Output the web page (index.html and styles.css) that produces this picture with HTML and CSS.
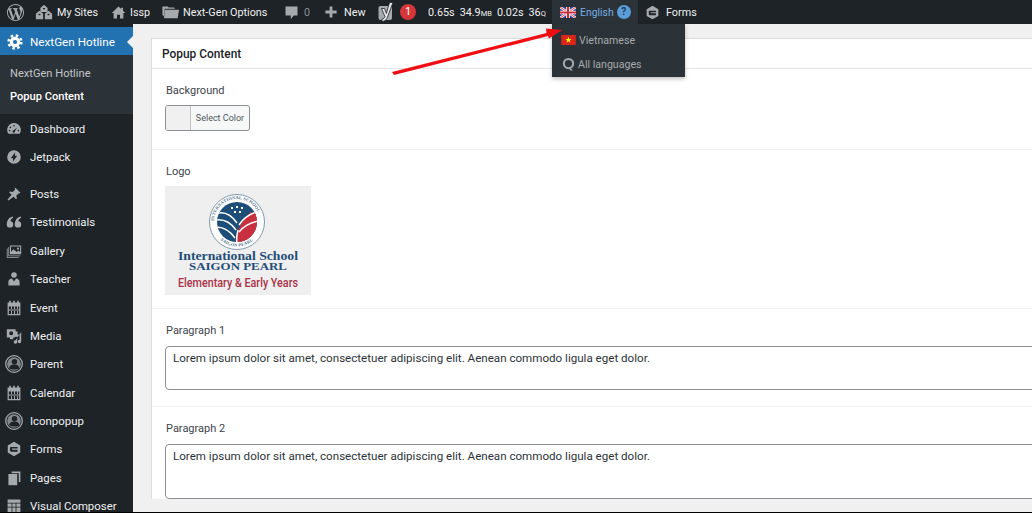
FILE: index.html
```html
<!DOCTYPE html>
<html lang="en">
<head>
<meta charset="utf-8">
<title>Popup Content</title>
<link rel="stylesheet" href="styles.css">
</head>
<body>
<svg class="defs" width="0" height="0" aria-hidden="true">
  <symbol id="i-cal" viewBox="0 0 20 20"><path d="M4 1h2v3H4zM9 1h2v3H9zM14 1h2v3h-2z"/><path d="M2 3h16v16H2zM3.500 8v9.500h2.800V8zm4 0v9.500h2.500V8h-2.500zm3.800 0v9.500h2.500V8zm3.700 0v9.500h1.500V8zM3.500 12h13v1h-13z" fill-rule="evenodd"/></symbol>
  <symbol id="i-person" viewBox="0 0 20 20"><circle cx="10" cy="10" r="9.200" fill="none" stroke="currentColor" stroke-width="1.400"/><circle cx="10" cy="10" r="7.600" opacity=".75"/><circle cx="10.500" cy="7.500" r="3" fill="#1d2327"/><path d="M4.500 15c.5-3.500 3-4.500 6-4.500s5 1 5.500 4.500c-3 1.500-8 1.500-11.500 0z" fill="#1d2327"/></symbol>
  <symbol id="i-forms" viewBox="0 0 20 20"><path d="M10 1l7.800 4.500v9L10 19l-7.800-4.500v-9z"/><path d="M6 7.500h8.500v2h-7v1.500h7v2.500H6.500C5.500 13.500 5 13 5 12V8.500c0-.6.4-1 1-1z" fill="#1d2327"/></symbol>
</svg>

<header class="adminbar">
  <a class="bar-item w-logo"><svg class="ico-w" viewBox="0 0 20 20"><path d="M20 10c0-5.510-4.490-10-10-10C4.480 0 0 4.490 0 10c0 5.520 4.480 10 10 10 5.510 0 10-4.480 10-10zM7.780 15.370L4.370 6.220c.55-.02 1.170-.08 1.170-.08.5-.06.44-1.130-.06-1.110 0 0-1.450.11-2.370.11-.18 0-.37 0-.58-.01C4.120 2.690 6.870 1.110 10 1.110c2.330 0 4.450.87 6.050 2.340-.68-.11-1.650.39-1.650 1.580 0 .74.45 1.360.9 2.100.35.61.55 1.360.55 2.460 0 1.490-1.400 5-1.400 5l-3.030-8.370c.54-.02.82-.17.82-.17.5-.05.44-1.250-.06-1.220 0 0-1.440.12-2.380.12-.87 0-2.330-.12-2.330-.12-.5-.03-.56 1.200-.06 1.220l.92.08 1.260 3.410zM17.410 10c.24-.64.74-1.870.43-4.250.7 1.290 1.050 2.710 1.050 4.250 0 3.290-1.730 6.240-4.400 7.780.97-2.590 1.940-5.200 2.920-7.780zM6.100 18.090C3.120 16.650 1.110 13.530 1.110 10c0-1.300.23-2.480.72-3.590C3.250 10.300 4.670 14.200 6.100 18.090zm4.030-6.630l2.580 6.980c-.86.29-1.760.45-2.710.45-.79 0-1.570-.11-2.290-.33.81-2.380 1.620-4.740 2.420-7.100z"/></svg></a>
  <a class="bar-item w-sites"><svg class="ico" viewBox="0 0 20 20"><path d="M10 2l4 3.500V10H6V5.500zM8.800 5.500v1.500h2.400V5.500zM5 8.500l4 3.500v6H1v-6zM4 12v1.500h2V12zM15 8.500l4 3.500v6h-8v-6zM14 12v1.500h2V12z" fill-rule="evenodd"/></svg><span>My Sites</span></a>
  <a class="bar-item w-home"><svg class="ico ico-15" viewBox="0 0 20 20"><path d="M10 2L1 10.500h2.500V18h4.500v-5h4v5h4.500v-7.500H19l-3-2.900V3.500h-2.500v1.700z"/></svg><span>Issp</span></a>
  <a class="bar-item w-folder"><svg class="ico ico-18" viewBox="0 0 20 20"><path d="M1 4h6l1 1h6l1 1.500H3.500L2.500 15 1 13z"/><path d="M3.500 7.500H19.500L18 17H2.800z"/></svg><span>Next-Gen Options</span></a>
  <a class="bar-item w-comment"><svg class="ico ico-15" viewBox="0 0 20 20"><path d="M2 2h16v12h-5l-4 5v-5H2z"/></svg><span class="dim">0</span></a>
  <a class="bar-item w-new"><svg class="ico ico-14" viewBox="0 0 20 20"><path d="M8 2h4v6h6v4h-6v6H8v-6H2V8h6z"/></svg><span>New</span></a>
  <a class="bar-item w-yoast"><svg class="ico ico-y" viewBox="0 0 16 20"><rect x="0.500" y="4" width="13.500" height="14" rx="2"/><path d="M11.500 0.500H15L9.300 15.500C8.300 18 6.500 19.500 4 19.500V17c1.500 0 2.500-.7 2.900-2.500L3.500 6.500h3l1.900 5z" fill="#e8e8e8" stroke="#1d2327" stroke-width=".8"/></svg><span class="badge">1</span></a>
  <a class="bar-item w-perf"><span>0.65s</span><span>34.9<small>MB</small></span><span>0.02s</span><span>36<small>Q</small></span></a>
  <a class="bar-item w-lang">
    <svg class="flag" viewBox="0 0 16 11"><rect width="16" height="11" fill="#2b3f86"/><path d="M0 0l16 11M16 0L0 11" stroke="#fff" stroke-width="2.400"/><path d="M0 0l16 11M16 0L0 11" stroke="#cf2a3c" stroke-width=".9"/><path d="M8 0v11M0 5.500h16" stroke="#fff" stroke-width="3.600"/><path d="M8 0v11M0 5.500h16" stroke="#cf2a3c" stroke-width="2"/></svg>
    <span class="lang-name">English</span><span class="help">?</span>
  </a>
  <a class="bar-item w-forms"><svg class="ico ico-15" viewBox="0 0 20 20"><use href="#i-forms"/></svg><span>Forms</span></a>

  <div class="lang-menu">
    <a class="lang-row"><svg class="flag-vn" viewBox="0 0 16 11"><rect width="16" height="11" fill="#da251d"/><path d="M8 2l.9 2.400h2.500l-2 1.500.8 2.500L8 6.900 5.800 8.400l.8-2.500-2-1.500h2.500z" fill="#ff0"/></svg><span>Vietnamese</span></a>
    <a class="lang-row"><svg class="globe" viewBox="0 0 14 16"><circle cx="7" cy="7" r="5" fill="none" stroke="currentColor" stroke-width="2.200"/><path d="M9 11l2.500 4-2-.5L7 12z"/></svg><span>All languages</span></a>
  </div>
</header>

<div class="layout">
  <nav class="sidebar">
    <a class="menu-current">
      <svg class="gear" viewBox="0 0 20 20"><circle cx="10" cy="10" r="6.500" fill="#fff"/><circle cx="10" cy="10" r="8" fill="none" stroke="#fff" stroke-width="3.200" stroke-dasharray="3.100 3.180"/><circle cx="10" cy="10" r="2.600" fill="#2271b1"/></svg>
      <span>NextGen Hotline</span>
    </a>
    <div class="submenu">
      <a>NextGen Hotline</a>
      <a class="sub-on">Popup Content</a>
    </div>
    <ul class="menu">
      <li><svg viewBox="0 0 20 20"><path d="M10 2.500a8.500 8.500 0 0 0-7 13.300h14A8.500 8.500 0 0 0 10 2.500zM10 5a1 1 0 1 1 0 2 1 1 0 0 1 0-2zM5.500 7a1 1 0 1 1 0 2 1 1 0 0 1 0-2zM14 8l-2.800 4.500a1.600 1.600 0 1 1-1.600-1zM4.500 11a1 1 0 1 1 0 2 1 1 0 0 1 0-2zM15.500 11a1 1 0 1 1 0 2 1 1 0 0 1 0-2z" fill-rule="evenodd"/></svg><span>Dashboard</span></li>
      <li><svg viewBox="0 0 20 20"><path d="M10 1.500a8.500 8.500 0 1 0 0 17 8.500 8.500 0 0 0 0-17zM11.500 4L6 11.500h3L8.500 16l5.500-7.500h-3z" fill-rule="evenodd"/></svg><span>Jetpack</span></li>
      <li class="gap"><svg viewBox="0 0 20 20"><path d="M11.500 2l6.500 6.500-1 1-1-.5-3 3 .5 3.500-1 1-3-3L3 18l-1-1 5-6-3-3 1-1 3.500.5 3-3-.5-1z"/></svg><span>Posts</span></li>
      <li><svg viewBox="0 0 20 20"><circle cx="5" cy="13" r="4"/><path d="M1 13C1 8 3.500 4 8.500 3l.5 1.800C6.500 6 5.500 8 5.500 10z"/><circle cx="15" cy="13" r="4"/><path d="M11 13c0-5 2.500-9 7.500-10l.5 1.800c-2.500 1.200-3.500 3.200-3.500 5.200z"/></svg><span>Testimonials</span></li>
      <li><svg viewBox="0 0 20 20"><path d="M5 3h14v11H5zM6.300 4.300v6.500l3-3 4 3.500 2-2 2.400 2V4.300zM15 5.500a1.400 1.400 0 1 1 0 2.800 1.400 1.400 0 0 1 0-2.800z" fill-rule="evenodd"/><path d="M3 5h1v10.500h14v1H3z"/><path d="M1 7h1v10.500h14v1H1z"/></svg><span>Gallery</span></li>
      <li><svg viewBox="0 0 20 20"><circle cx="10" cy="5" r="3.500"/><path d="M3 18v-4c0-3 2-4.500 4.500-4.500L10 13l2.500-3.500C15 9.500 17 11 17 14v4z"/></svg><span>Teacher</span></li>
      <li><svg viewBox="0 0 20 20"><use href="#i-cal"/></svg><span>Event</span></li>
      <li><svg viewBox="0 0 20 20"><path d="M1 1.500h11v3h2.500V11H12l-1.500 1H9v2H5v-2H1zM6.500 4a2.500 2.500 0 1 0 0 5 2.500 2.500 0 0 0 0-5z" fill-rule="evenodd"/><path d="M19 5v12a2.200 2.200 0 1 1-2-2.200V8h-3v9.500a2.200 2.200 0 1 1-2-2.200"/></svg><span>Media</span></li>
      <li class="big"><svg viewBox="0 0 20 20"><use href="#i-person"/></svg><span>Parent</span></li>
      <li><svg viewBox="0 0 20 20"><use href="#i-cal"/></svg><span>Calendar</span></li>
      <li class="big"><svg viewBox="0 0 20 20"><use href="#i-person"/></svg><span>Iconpopup</span></li>
      <li><svg viewBox="0 0 20 20"><use href="#i-forms"/></svg><span>Forms</span></li>
      <li><svg viewBox="0 0 20 20"><path d="M7 2h11v13h-2V4H7z"/><path d="M3 5h11v14H3z"/></svg><span>Pages</span></li>
      <li><svg viewBox="0 0 20 20"><path d="M2 2h16v4H2zM2 7h5v4H2zM8 7h4v4H8zM13 7h5v4h-5zM2 12h5v6H2zM8 12h4v6H8zM13 12h5v6h-5z"/></svg><span>Visual Composer</span></li>
    </ul>
  </nav>

  <main class="content">
    <section class="card">
      <h2 class="card-title">Popup Content</h2>
      <div class="field field-bg">
        <label class="field-label">Background</label>
        <button class="color-btn" type="button"><span class="swatch"></span><span class="color-text">Select Color</span></button>
      </div>
      <div class="field field-logo">
        <label class="field-label">Logo</label>
        <svg class="logo" viewBox="0 0 146 109" role="img">
          <defs><clipPath id="seal"><circle cx="72" cy="36" r="20"/></clipPath></defs>
          <rect width="146" height="109" fill="#efefef"/>
          <circle cx="72" cy="36" r="27.500" fill="#fff" stroke="#7d99ad" stroke-width="1"/>
          <path id="ring" d="M49 36a23 23 0 1 1 46 0" fill="none"/>
          <path id="ring2" d="M47.500 36a24.500 24.500 0 0 0 49 0" fill="none"/>
          <text class="ring-text"><textPath href="#ring" startOffset="1">INTERNATIONAL SCHOOL</textPath></text>
          <text class="ring-text"><textPath href="#ring2" startOffset="20">SAIGON PEARL</textPath></text>
          <g clip-path="url(#seal)">
            <rect x="50" y="14" width="44" height="44" fill="#1d4e79"/>
            <path d="M72 56c-1-12 5-22 14-30l10 2v14c-8 10-16 16-24 14z" fill="#c9303f"/>
            <path d="M74 46c4-5 10-9 19-11M74 39c3-5 9-10 17-13" stroke="#fff" stroke-width="1.500" fill="none"/>
            <path d="M51 34c8-1 15 3 20 10M51 41c7 0 14 4 19 11M54 27c7-1 13 3 18 10" stroke="#fff" stroke-width="1.500" fill="none"/>
            <path d="M72 58c-1-6 0-10 1-14" stroke="#fff" stroke-width="1.500" fill="none"/>
            <path d="M66 21h2v2h-2zM71 20h2v2h-2zM76 21h2v2h-2zM69 25h2v2h-2zM74 25h2v2h-2z" fill="#fff"/>
          </g>
          <text class="logo-serif" x="13" y="73.500" textLength="120" lengthAdjust="spacingAndGlyphs">International School</text>
          <text class="logo-serif logo-sm" x="24" y="84" textLength="98" lengthAdjust="spacingAndGlyphs">SAIGON PEARL</text>
          <text class="logo-sans" x="13" y="100.500" textLength="120" lengthAdjust="spacingAndGlyphs">Elementary &amp; Early Years</text>
        </svg>
      </div>
      <div class="field field-p1">
        <label class="field-label">Paragraph 1</label>
        <div class="textbox tb-1">Lorem ipsum dolor sit amet, consectetuer adipiscing elit. Aenean commodo ligula eget dolor.</div>
      </div>
      <div class="field field-p2">
        <label class="field-label">Paragraph 2</label>
        <div class="textbox tb-2">Lorem ipsum dolor sit amet, consectetuer adipiscing elit. Aenean commodo ligula eget dolor.</div>
      </div>
    </section>
  </main>
</div>
<div class="edge"></div>

<svg class="arrow" viewBox="0 0 1032 513" aria-hidden="true"><path d="M392 72L546.500 33 546 28.500 562 30 549 38.500 548 36 394 75z" fill="#f00e12"/></svg>
</body>
</html>
```
FILE: styles.css
```css
* { box-sizing: border-box; }
html, body { margin: 0; height: 100%; }
body {
  position: relative;
  display: flex;
  flex-direction: column;
  width: 1032px;
  height: 513px;
  overflow: hidden;
  background: #f0f0f1;
  font-family: Roboto, "Noto Sans", sans-serif;
  font-size: 12px;
  color: #3c434a;
}
.defs { position: absolute; }
a { color: inherit; text-decoration: none; }

/* Admin bar */
.adminbar {
  position: relative;
  flex: 0 0 24px;
  display: flex;
  align-items: stretch;
  height: 24px;
  background: #1d2327;
  color: #f0f0f1;
  font-size: 10.8px;
}
.bar-item { display: flex; align-items: center; white-space: nowrap; }
.ico, .ico-w { fill: #a7aaad; flex: none; width: 18px; height: 18px; color: #a7aaad; }
.ico-15 { width: 15px; height: 15px; }
.ico-14 { width: 14px; height: 14px; }
.ico-18 { width: 19px; height: 18px; }
.ico-y { width: 16px; height: 20px; }
.ico-w { width: 17px; height: 17px; }
.w-logo { padding-left: 7px; width: 35px; }
.w-sites { width: 76px; gap: 4px; }
.w-home { width: 50px; gap: 4px; }
.w-folder { width: 123px; gap: 3px; }
.w-comment { width: 40px; gap: 5px; }
.w-new { width: 54px; gap: 6px; }
.w-yoast { width: 50px; gap: 6px; }
.w-perf { width: 124px; gap: 5px; }
.w-perf small { font-size: 7.5px; }
.dim { color: #8c8f94; }
.badge {
  width: 16px; height: 16px;
  border-radius: 50%;
  background: #d63638;
  color: #fff;
  text-align: center;
  line-height: 16px;
  font-size: 11px;
}
.w-lang { width: 86px; padding-left: 8px; background: #2c3338; color: #72aee6; }
.flag { width: 16px; height: 11px; flex: none; }
.lang-name { margin-left: 4px; font-size: 10.4px; }
.help {
  margin-left: 3px;
  width: 14px; height: 14px;
  border-radius: 50%;
  background: #5b9dd9;
  color: #1d3a5a;
  font-size: 10px;
  line-height: 14px;
  text-align: center;
  font-weight: 700;
}
.w-forms { gap: 6px; padding-left: 7px; }

.lang-menu {
  position: absolute;
  left: 552px;
  top: 24px;
  width: 133px;
  height: 53px;
  padding-top: 4px;
  background: #2c3338;
  box-shadow: 0 2px 4px rgba(0,0,0,.25);
  color: #a7aaad;
  font-size: 10.6px;
  z-index: 2;
}
.lang-row { display: flex; align-items: center; height: 24px; padding-left: 9px; gap: 3px; }
.flag-vn { width: 15px; height: 10px; }
.globe { width: 13px; height: 15px; fill: #a7aaad; color: #a7aaad; margin-left: 1px; }

/* Layout */
.layout { flex: 1; display: flex; min-height: 0; }
.sidebar {
  flex: 0 0 133px;
  width: 133px;
  padding-top: 3px;
  background: #1d2327;
  color: #f0f0f1;
  font-size: 11.4px;
  overflow: hidden;
}
.menu-current {
  position: relative;
  display: flex;
  align-items: center;
  gap: 7px;
  height: 28px;
  padding-left: 7px;
  padding-top: 1px;
  background: #2271b1;
  color: #fff;
  font-size: 11.7px;
}
.menu-current::after {
  content: "";
  position: absolute;
  right: 0; top: 9px;
  border: 6px solid transparent;
  border-right-color: #f0f0f1;
  border-left: 0;
}
.gear { width: 16px; height: 16px; flex: none; }
.submenu { height: 59px; padding-top: 7px; background: #2c3338; color: #c3c4c7; font-size: 11.1px; }
.submenu a { display: block; padding-left: 10px; height: 23px; line-height: 23px; }
.submenu .sub-on { color: #fff; font-weight: 500; }
.menu { list-style: none; margin: 0; padding: 0; }
.menu li { display: flex; align-items: center; gap: 8px; height: 28.4px; padding-left: 6px; padding-top: 1px; white-space: nowrap; }
.menu li svg { width: 16px; height: 16px; flex: none; fill: #a7aaad; color: #a7aaad; }
.menu .gap { margin-top: 8.5px; }
.menu .big { padding-left: 5px; gap: 7px; }
.menu .big svg { width: 18px; height: 18px; }

/* Content */
.content { flex: 1; min-width: 0; padding: 14px 0 0 18px; overflow: hidden; }
.card {
  width: 1000px;
  background: #fff;
  border: 1px solid #dcdcde;
  border-bottom: 0;
  border-right: 0;
}
.card-title {
  margin: 0;
  height: 30px;
  padding-left: 10px;
  border-bottom: 1px solid #e6e6e7;
  font-size: 11.9px;
  font-weight: 500;
  line-height: 30px;
  color: #1d2327;
}
.field { padding: 0 0 0 13px; border-bottom: 1px solid #f0f0f1; }
.field-label { display: block; margin-left: 1px; padding-top: 1px; font-size: 11px; line-height: 16px; color: #3c434a; }
.field-bg { height: 81px; padding-top: 13px; }
.color-btn {
  display: flex;
  align-items: stretch;
  width: 85px;
  height: 26px;
  margin-top: 6px;
  padding: 0;
  border: 1px solid #8c8f94;
  border-radius: 3px;
  background: #f6f7f7;
  font: inherit;
  color: #50575e;
  overflow: hidden;
}
.swatch { width: 25px; background: #f0f0f1; border-right: 1px solid #c3c4c7; }
.color-text { flex: 1; font-size: 9px; line-height: 25px; text-align: center; white-space: nowrap; }
.field-logo { height: 159px; padding-top: 13px; }
.logo { display: block; width: 146px; height: 109px; margin-top: 6px; }
.ring-text { font: 700 4.4px "Liberation Serif", serif; fill: #4e6f8a; letter-spacing: .2px; }
.logo-serif { font: 700 12px "Liberation Serif", serif; fill: #1f4e79; }
.logo-sm { font-size: 10px; }
.logo-sans { font: 500 12px Roboto, sans-serif; fill: #ab3246; }
.field-p1 { height: 98px; padding-top: 13px; }
.field-p2 { padding-top: 13px; border-bottom: 0; }
.textbox {
  width: 900px;
  margin-top: 7px;
  padding: 3px 7px;
  border: 1px solid #8c8f94;
  border-radius: 4px;
  background: #fff;
  font-size: 11.6px;
  line-height: 17px;
  color: #2c3338;
  white-space: nowrap;
}
.tb-1 { height: 44px; }
.tb-2 { height: 55px; }

.edge { flex: 0 0 1px; background: #000; }
.arrow { position: absolute; inset: 0; width: 1032px; height: 513px; pointer-events: none; z-index: 3; }
```
